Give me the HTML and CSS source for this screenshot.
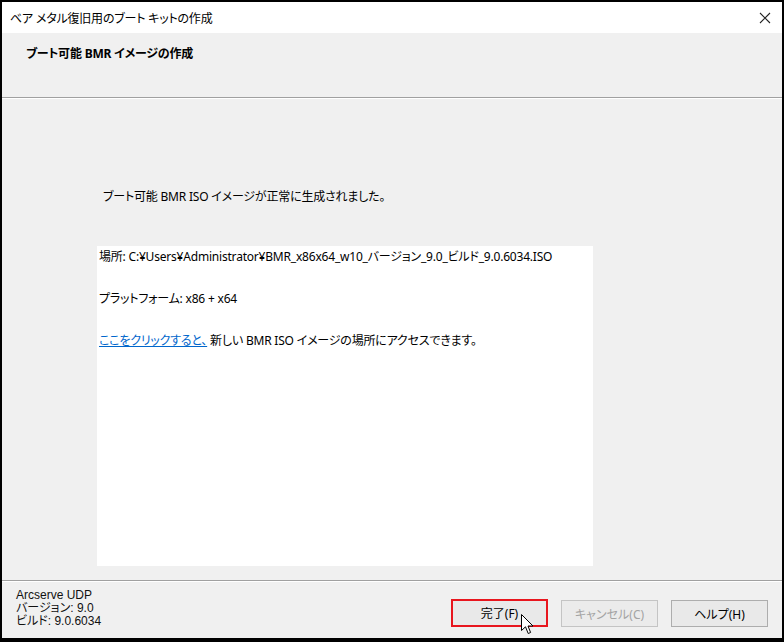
FILE: index.html
```html
<!DOCTYPE html>
<html lang="ja">
<head>
	<meta charset="UTF-8">
	<title>ベア メタル復旧用のブート キットの作成</title>
	<link rel="stylesheet" href="styles.css">
</head>
<body>
	<div class="window">
		<div class="titlebar">
			<span class="title">ベア メタル復旧用のブート キットの作成</span>
			<svg class="close" width="12" height="12" viewBox="0 0 12 12">
				<path d="M1 1 L11 11 M11 1 L1 11" stroke="#222" stroke-width="1.1" fill="none"/>
			</svg>
		</div>
		<div class="header">
			<h1>ブート可能 BMR イメージの作成</h1>
		</div>
		<div class="content">
			<p class="message">ブート可能 BMR ISO イメージが正常に生成されました。</p>
			<div class="result">
				<p>場所: C:¥Users¥Administrator¥BMR_x86x64_w10_バージョン_9.0_ビルド_9.0.6034.ISO</p>
				<p>プラットフォーム: x86 + x64</p>
				<p><a href="##">ここをクリックすると、</a> 新しい BMR ISO イメージの場所にアクセスできます。</p>
			</div>
		</div>
		<div class="footer">
			<div class="version">
				<div>Arcserve UDP</div>
				<div>バージョン: 9.0</div>
				<div>ビルド: 9.0.6034</div>
			</div>
			<div class="buttons">
				<button class="btn finish" type="button">完了(F)</button>
				<button class="btn" type="button" disabled>キャンセル(C)</button>
				<button class="btn" type="button">ヘルプ(H)</button>
			</div>
			<!-- マウスカーソル -->
			<svg class="cursor" width="13" height="21" viewBox="0 0 13 21">
				<path d="M0.5 0.5 L0.5 16.5 L4.5 12.8 L7.2 19.5 L9.6 18.5 L7 12 L12 12 Z" fill="#fff" stroke="#000" stroke-width="1"/>
			</svg>
		</div>
	</div>
</body>
</html>
```

FILE: styles.css
```css
body {
	margin: 0;
	background: #000;
	font-family: "Noto Sans", "Noto Sans CJK JP", sans-serif;
	font-size: 12px;
	font-feature-settings: "palt";
	letter-spacing: -0.2px;
	color: #000;
}

.window {
	position: relative;
	display: flex;
	flex-direction: column;
	width: 780px;
	height: 636px;
	margin: 2px 2px 4px 2px;
	background: #f0f0f0;
}

.titlebar {
	display: flex;
	align-items: center;
	justify-content: space-between;
	height: 31px;
	padding: 0 11px 0 8px;
	background: #fff;
}
.title {
	font-size: 12px;
}

.header {
	height: 64px;
	padding-left: 24px;
	border-bottom: 1px solid #a0a0a0;
	box-shadow: 0 1px 0 #fff;
}
.header h1 {
	margin: 11px 0 0;
	font-size: 12px;
	font-weight: bold;
}

.content {
	flex: 1;
	padding: 91px 0 0 95px;
	border-bottom: 1px solid #a0a0a0;
	box-shadow: 0 1px 0 #fff;
}
.message {
	margin: 0 0 41px 6px;
	line-height: 16px;
}
.result {
	width: 494px;
	height: 317px;
	padding: 3px 0 0 2px;
	background: #fff;
}
.result p {
	margin: 0 0 26px;
	line-height: 16px;
}
.result a {
	color: #0066cc;
}

.footer {
	position: relative;
	display: flex;
	justify-content: space-between;
	height: 56px;
	padding: 0 14px 0 14px;
	margin-top: 1px;
}
.version {
	padding-top: 7px;
	font-family: "Liberation Sans", "Noto Sans CJK JP", sans-serif;
	font-size: 12px;
	line-height: 13px;
	letter-spacing: 0;
	color: #111;
}

.buttons {
	display: flex;
	gap: 13px;
	padding-top: 18px;
}
.btn {
	width: 97px;
	height: 27px;
	font-family: "Noto Sans", "Noto Sans CJK JP", sans-serif;
	font-size: 12px;
	font-feature-settings: "palt";
	color: #000;
	background: #e9e9e9;
	border: 1px solid #adadad;
}
.btn:disabled {
	color: #a3a3a3;
	border-color: #c4c4c4;
	background: #ebebeb;
}
.finish {
	border: 2px solid #e8161e;
	height: 28px;
	margin-top: -1px;
}

.cursor {
	position: absolute;
	left: 519px;
	top: 32px;
}
```
